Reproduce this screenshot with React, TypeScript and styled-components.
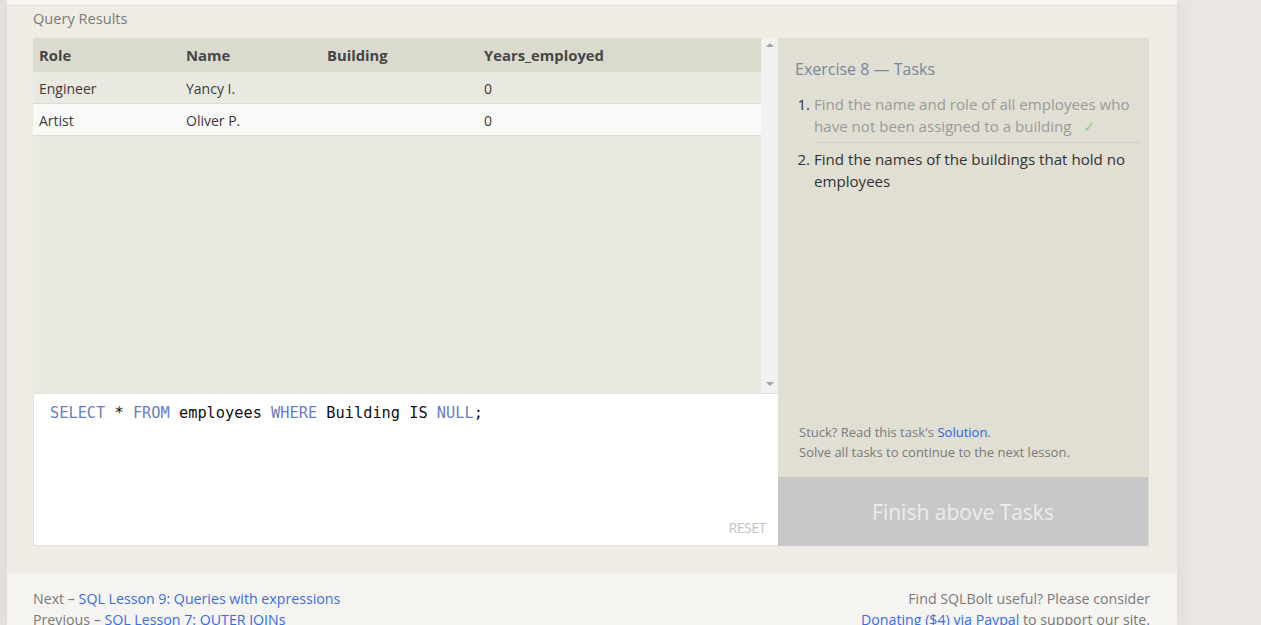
import React from "react";
import styled, { createGlobalStyle } from "styled-components";

const GlobalStyle = createGlobalStyle`
  html, body { margin: 0; padding: 0; }
  body {
    background: #ebe7e4;
    font-family: "Open Sans", "Noto Sans", sans-serif;
    overflow: hidden;
  }
`;

const Page = styled.div`
  display: flex;
  min-height: 625px;
`;

const LeftGutter = styled.div`
  width: 7px;
  flex: none;
  background: #e4e0dd;
`;

const Column = styled.div`
  width: 1170px;
  flex: none;
  display: flex;
  flex-direction: column;
  box-shadow: 6px 0 18px rgba(120, 100, 90, 0.08);
`;

const TopStrip = styled.div`
  height: 5px;
  background: #f7f6f3;
  border-bottom: 1px solid #dedbd5;
`;

const Panel = styled.section`
  background: #efece5;
  padding: 0 28px 27px 26px;
`;

const SectionLabel = styled.div`
  font-size: 14.6px;
  line-height: 25px;
  color: #7a7a7a;
  margin-bottom: 7px;
`;

const Workspace = styled.div`
  display: grid;
  grid-template-columns: 745px 371px;
`;

const LeftCol = styled.div`
  display: flex;
  flex-direction: column;
`;

const Results = styled.div`
  height: 355px;
  display: flex;
  background: #e9e8e1;
`;

const TableArea = styled.div`
  flex: 1;
  display: flex;
  flex-direction: column;
`;

const Row = styled.div<{ $kind: "head" | "odd" | "even" }>`
  display: grid;
  grid-template-columns: 147px 141px 157px 1fr;
  height: ${(p) => (p.$kind === "head" ? "34px" : "30px")};
  padding-top: ${(p) => (p.$kind === "head" ? "0" : "1px")};
  align-items: center;
  background: ${(p) =>
    p.$kind === "head" ? "#dbdacf" : p.$kind === "odd" ? "#e9e8e1" : "#f9f9f8"};
  border-bottom: ${(p) => (p.$kind === "head" ? "none" : "1px solid #dcdbd5")};
  font-size: ${(p) => (p.$kind === "head" ? "14.8px" : "14px")};
  font-weight: ${(p) => (p.$kind === "head" ? 700 : 400)};
  color: ${(p) => (p.$kind === "head" ? "#464646" : "#3a3a3a")};
  box-sizing: content-box;
`;

const Cell = styled.div`
  padding-left: 6px;
  white-space: nowrap;
`;

const Scrollbar = styled.div`
  width: 17px;
  flex: none;
  background: #f1f1f1;
  display: flex;
  flex-direction: column;
  justify-content: space-between;
  align-items: center;
  padding: 5px 0 7px;
  box-sizing: border-box;
`;

const Arrow = styled.div<{ $down?: boolean }>`
  width: 0;
  height: 0;
  border-left: 4px solid transparent;
  border-right: 4px solid transparent;
  ${(p) =>
    p.$down
      ? "border-top: 4px solid #a3a3a3;"
      : "border-bottom: 4px solid #a3a3a3;"}
`;

const Editor = styled.div`
  height: 153px;
  box-sizing: border-box;
  background: #ffffff;
  border: 1px solid #e2e1db;
  border-right: none;
  display: flex;
  flex-direction: column;
  padding: 9px 12px 8px 16px;
`;

const Code = styled.div`
  font-family: "DejaVu Sans Mono", "Liberation Mono", monospace;
  font-size: 15.3px;
  line-height: 20px;
  color: #111;
  white-space: pre;
`;

const Kw = styled.span`
  color: #6a7dc0;
`;

const Reset = styled.div`
  margin-top: auto;
  align-self: flex-end;
  font-size: 14px;
  color: #c2c2c2;
  letter-spacing: -0.4px;
`;

const RightCol = styled.div`
  display: flex;
  flex-direction: column;
`;

const Tasks = styled.div`
  height: 439px;
  box-sizing: border-box;
  background: #e1dfd4;
  padding: 19px 8px 0 17px;
  display: flex;
  flex-direction: column;
`;

const TasksTitle = styled.div`
  font-size: 16px;
  line-height: 24px;
  color: #778899;
  margin-bottom: 12px;
`;

const TaskList = styled.ol`
  margin: 0;
  padding-left: 19px;
`;

const TaskItem = styled.li<{ $done?: boolean }>`
  font-size: 15.1px;
  line-height: 22px;
  color: ${(p) => (p.$done ? "#9a9a9a" : "#333")};
  padding: 0 0 5px 0;
  margin-bottom: 5px;
  border-bottom: ${(p) => (p.$done ? "1px solid #d2d0c6" : "none")};
  &::marker {
    color: #333;
  }
`;

const Check = styled.span`
  color: #8fd08f;
  margin-left: 11px;
`;

const Help = styled.div`
  margin-top: auto;
  padding: 0 0 15px 4px;
  font-size: 13px;
  line-height: 20px;
  color: #7a7a7a;
`;

const Link = styled.a`
  color: #2760e8;
  text-decoration: none;
`;

const FinishButton = styled.div`
  height: 69px;
  background: #c8c8c8;
  border-right: 1px solid #dcdad2;
  display: flex;
  align-items: center;
  justify-content: center;
  font-size: 21px;
  color: #ececec;
`;

const Footer = styled.footer`
  background: #f5f4f1;
  padding: 15px 27px 0 26px;
  display: flex;
  justify-content: space-between;
  font-size: 14.2px;
  line-height: 21px;
  color: #7a7a7a;
`;

const FooterRight = styled.div`
  text-align: right;
`;

const FootLink = styled.a`
  color: #3a6ee0;
  text-decoration: none;
`;

const rows = [
  { role: "Engineer", name: "Yancy I.", building: "", years: "0" },
  { role: "Artist", name: "Oliver P.", building: "", years: "0" },
];

export default function App() {
  return (
    <>
      <GlobalStyle />
      <Page>
        <LeftGutter />
        <Column>
          <TopStrip />
          <Panel>
            <SectionLabel>Query Results</SectionLabel>
            <Workspace>
              <LeftCol>
                <Results>
                  <TableArea>
                    <Row $kind="head">
                      <Cell>Role</Cell>
                      <Cell>Name</Cell>
                      <Cell>Building</Cell>
                      <Cell>Years_employed</Cell>
                    </Row>
                    {rows.map((r, i) => (
                      <Row key={i} $kind={i % 2 === 0 ? "odd" : "even"}>
                        <Cell>{r.role}</Cell>
                        <Cell>{r.name}</Cell>
                        <Cell>{r.building}</Cell>
                        <Cell>{r.years}</Cell>
                      </Row>
                    ))}
                  </TableArea>
                  <Scrollbar>
                    <Arrow />
                    <Arrow $down />
                  </Scrollbar>
                </Results>
                <Editor>
                  <Code>
                    <Kw>SELECT</Kw> * <Kw>FROM</Kw> employees <Kw>WHERE</Kw> Building IS{" "}
                    <Kw>NULL</Kw>;
                  </Code>
                  <Reset>RESET</Reset>
                </Editor>
              </LeftCol>
              <RightCol>
                <Tasks>
                  <TasksTitle>Exercise 8 — Tasks</TasksTitle>
                  <TaskList>
                    <TaskItem $done>
                      Find the name and role of all employees who have not been assigned to a
                      building<Check>✓</Check>
                    </TaskItem>
                    <TaskItem>Find the names of the buildings that hold no employees</TaskItem>
                  </TaskList>
                  <Help>
                    Stuck? Read this task's <Link href="#">Solution</Link>.
                    <br />
                    Solve all tasks to continue to the next lesson.
                  </Help>
                </Tasks>
                <FinishButton>Finish above Tasks</FinishButton>
              </RightCol>
            </Workspace>
          </Panel>
          <Footer>
            <div>
              Next – <FootLink href="#">SQL Lesson 9: Queries with expressions</FootLink>
              <br />
              Previous – <FootLink href="#">SQL Lesson 7: OUTER JOINs</FootLink>
            </div>
            <FooterRight>
              Find SQLBolt useful? Please consider
              <br />
              <FootLink href="#">Donating ($4) via Paypal</FootLink> to support our site.
            </FooterRight>
          </Footer>
        </Column>
      </Page>
    </>
  );
}
